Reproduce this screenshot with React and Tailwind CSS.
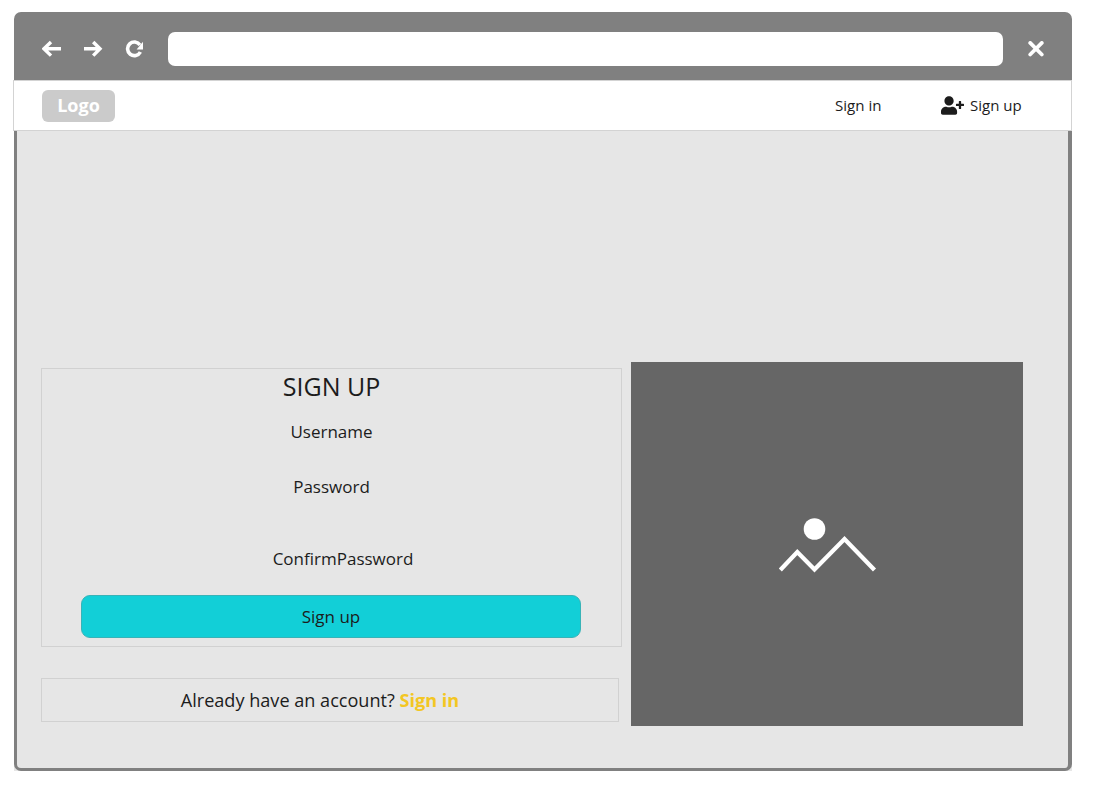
import { FaUserPlus } from "react-icons/fa";

function ToolbarIcons() {
  return (
    <svg width="102" height="18" viewBox="42 40 102 18" fill="none" stroke="#fff" className="shrink-0">
      <path d="M44 48.8H61M51 42L44 48.8L51 55.6" strokeWidth="3.4" />
      <path d="M84 48.8H100.5M93.2 42L100 48.8L93.2 55.6" strokeWidth="3.4" />
      <path d="M140 45A6.8 6.8 0 1 0 140.4 52" strokeWidth="3.6" />
      <path d="M143 41.8V49.4H136.6Z" fill="#fff" stroke="none" />
    </svg>
  );
}

export default function App() {
  return (
    <div className="h-[794px] w-[1098px] overflow-hidden bg-white pt-3 pl-[14px] font-['Open_Sans',sans-serif] text-[#1c1c1c]">
      <div className="flex h-[759px] w-[1058px] flex-col">
        <header className="flex h-[68px] shrink-0 items-center rounded-t-[7px] bg-[#808080] pt-[6px] pl-7">
          <ToolbarIcons />
          <div className="ml-6 h-[34px] w-[835px] rounded-[7px] bg-white" />
          <svg width="16" height="16" viewBox="0 0 16 16" stroke="#fff" strokeWidth="3.7" strokeLinecap="round" className="ml-[25px]">
            <path d="M2.2 1.9L13.8 13.5M13.8 1.9L2.2 13.5" />
          </svg>
        </header>
        <nav className="-ml-px flex h-[51px] w-[1059px] shrink-0 items-center border border-[#d3d3d3] bg-white pl-7 text-[15px]">
          <div className="flex h-8 w-[73px] items-center justify-center rounded-[6px] bg-[#cbcbcb] text-[18px] font-bold text-white">
            Logo
          </div>
          <a className="ml-[720px] w-[106px] text-[15.1px]">Sign in</a>
          <FaUserPlus size={23} className="shrink-0" />
          <a className="ml-[6px]">Sign up</a>
        </nav>
        <div className="grow bg-[#e6e6e6]">
          <main className="flex h-full rounded-b-[7px] border-r-4 border-b-[3px] border-l-[3px] border-[#808080] bg-[#e6e6e6] pl-6">
            <div className="flex w-[590px] shrink-0 flex-col pt-[237px]">
              <form className="flex h-[279px] w-[581px] flex-col items-center border border-[#d1d1d1] text-[17px] leading-6">
                <h1 className="mt-px text-[25px] leading-8">SIGN UP</h1>
                <label className="mt-[18px]">Username</label>
                <label className="mt-[31px]">Password</label>
                <label className="mt-12 mr-px ml-6">ConfirmPassword</label>
                <button type="button" className="mt-6 mr-px h-[43px] w-[500px] rounded-[9px] border border-[#38b3b7] bg-[#12cfd7]">
                  Sign up
                </button>
              </form>
              <div className="mt-[31px] flex h-11 w-[578px] items-center justify-center border border-[#d1d1d1] pr-[20px] text-[18.1px]">
                <p className="leading-7 whitespace-nowrap">
                  Already have an account? <b className="text-[#f3c623]">Sign in</b>
                </p>
              </div>
            </div>
            <div className="mt-[231px] h-[364px] w-[392px] bg-[#666] pt-[155px] pl-[148px]">
              <svg width="98" height="56" viewBox="779 517 98 56" fill="none">
                <circle cx="814.5" cy="529" r="10.8" fill="#fff" />
                <path d="M780.3 570L797.3 552L814.5 569.5L844.5 539L874.5 570" stroke="#fff" strokeWidth="4.3" />
              </svg>
            </div>
          </main>
        </div>
      </div>
    </div>
  );
}
